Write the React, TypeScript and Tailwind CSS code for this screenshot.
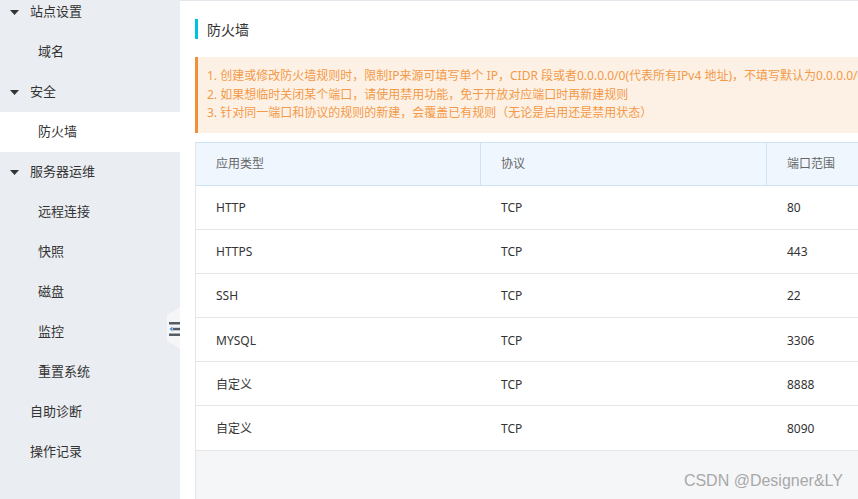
const font = { fontFamily: '"Noto Sans", "Noto Sans CJK SC", sans-serif' };

type NavItem = { label: string; level: "group" | "sub" | "plain"; active?: boolean };

const nav: NavItem[] = [
  { label: "站点设置", level: "group" },
  { label: "域名", level: "sub" },
  { label: "安全", level: "group" },
  { label: "防火墙", level: "sub", active: true },
  { label: "服务器运维", level: "group" },
  { label: "远程连接", level: "sub" },
  { label: "快照", level: "sub" },
  { label: "磁盘", level: "sub" },
  { label: "监控", level: "sub" },
  { label: "重置系统", level: "sub" },
  { label: "自助诊断", level: "plain" },
  { label: "操作记录", level: "plain" },
];

const rules = [
  { type: "HTTP", proto: "TCP", port: "80" },
  { type: "HTTPS", proto: "TCP", port: "443" },
  { type: "SSH", proto: "TCP", port: "22" },
  { type: "MYSQL", proto: "TCP", port: "3306" },
  { type: "自定义", proto: "TCP", port: "8888" },
  { type: "自定义", proto: "TCP", port: "8090" },
];

function Sidebar() {
  return (
    <div className="relative w-[180px] shrink-0 bg-[#eaedf1]">
      <div className="-mt-[8px]">
        {nav.map((item) => (
          <div
            key={item.label}
            className={`flex h-10 items-center text-[13px] text-[#333] ${
              item.active ? "bg-white" : ""
            } ${item.level === "sub" ? "pl-[38px]" : item.level === "plain" ? "pl-[30px]" : "pl-[10px]"}`}
          >
            {item.level === "group" && (
              <svg width="9" height="5" viewBox="0 0 9 5" className="mr-[11px]">
                <path d="M0 0h9L4.5 5z" fill="#333" />
              </svg>
            )}
            {item.label}
          </div>
        ))}
      </div>
      {/* collapse handle */}
      <div className="absolute right-0 top-[307px] h-[42px] w-[13px]">
        <svg width="13" height="42" viewBox="0 0 13 42" className="absolute inset-0">
          <path d="M13 0V42L0 34V8z" fill="#f5f6f7" />
        </svg>
        <svg width="11" height="14" viewBox="0 0 11 14" className="absolute left-[2px] top-[15px]">
          <rect x="0" y="0" width="11" height="2.5" fill="#555c66" />
          <rect x="4" y="5.8" width="7" height="2.5" fill="#555c66" />
          <path d="M0.5 7l3-2.5v5z" fill="#4a90e2" />
          <rect x="0" y="11.5" width="11" height="2.5" fill="#555c66" />
        </svg>
      </div>
    </div>
  );
}

function RulesTable() {
  return (
    <div className="flex flex-1 flex-col border-l border-[#e5e5e5] bg-[#f5f6f8]">
      <div className="flex h-[44px] w-[1000px] items-center border-y border-[#cfe3f7] bg-[#eff6fe] text-[12px] text-[#666]">
        <div className="flex h-full w-[285px] items-center border-r border-[#cfe3f7] pl-[20px]">应用类型</div>
        <div className="flex h-full w-[286px] items-center border-r border-[#cfe3f7] pl-[20px]">协议</div>
        <div className="flex h-full flex-1 items-center pl-[20px]">端口范围</div>
      </div>
      {rules.map((r, i) => (
        <div
          key={i}
          className="flex h-[44.2px] w-[1000px] items-center border-b border-[#e5e5e5] bg-white pt-[2px] text-[12px] text-[#333]"
        >
          <div className="w-[285px] pl-[20px]">{r.type}</div>
          <div className="w-[286px] pl-[20px]">{r.proto}</div>
          <div className="flex-1 pl-[20px]">{r.port}</div>
        </div>
      ))}
    </div>
  );
}

export default function App() {
  return (
    <div className="relative flex h-[499px] w-[858px] overflow-hidden bg-white" style={font}>
      <Sidebar />
      <div className="flex min-w-0 flex-1 flex-col overflow-hidden border-t border-[#e3e6ea] pl-[15px]">
        <div className="mt-[18px] flex h-[20px] items-center">
          <span className="h-[20px] w-[3px] bg-[#00c1de]" />
          <span className="ml-[9px] text-[14px] text-[#333]">防火墙</span>
        </div>
        <div className="mt-[18px] w-[1000px] border-l-[3px] border-[#f0913a] bg-[#fdf1e6] py-[10px] pl-[9px] text-[12px] leading-[18.5px] text-[#f39a48]">
          <p>1. 创建或修改防火墙规则时，限制IP来源可填写单个 IP，CIDR 段或者0.0.0.0/0(代表所有IPv4 地址)，不填写默认为0.0.0.0/0</p>
          <p>2. 如果想临时关闭某个端口，请使用禁用功能，免于开放对应端口时再新建规则</p>
          <p>3. 针对同一端口和协议的规则的新建，会覆盖已有规则（无论是启用还是禁用状态）</p>
        </div>
        <div className="mt-[9px] flex flex-1">
          <RulesTable />
        </div>
      </div>
      <div className="absolute bottom-[6px] right-[15px] text-[16px] text-[#a8a8a8]" style={{ fontFamily: '"Liberation Sans", sans-serif' }}>
        CSDN @Designer&amp;LY
      </div>
    </div>
  );
}
